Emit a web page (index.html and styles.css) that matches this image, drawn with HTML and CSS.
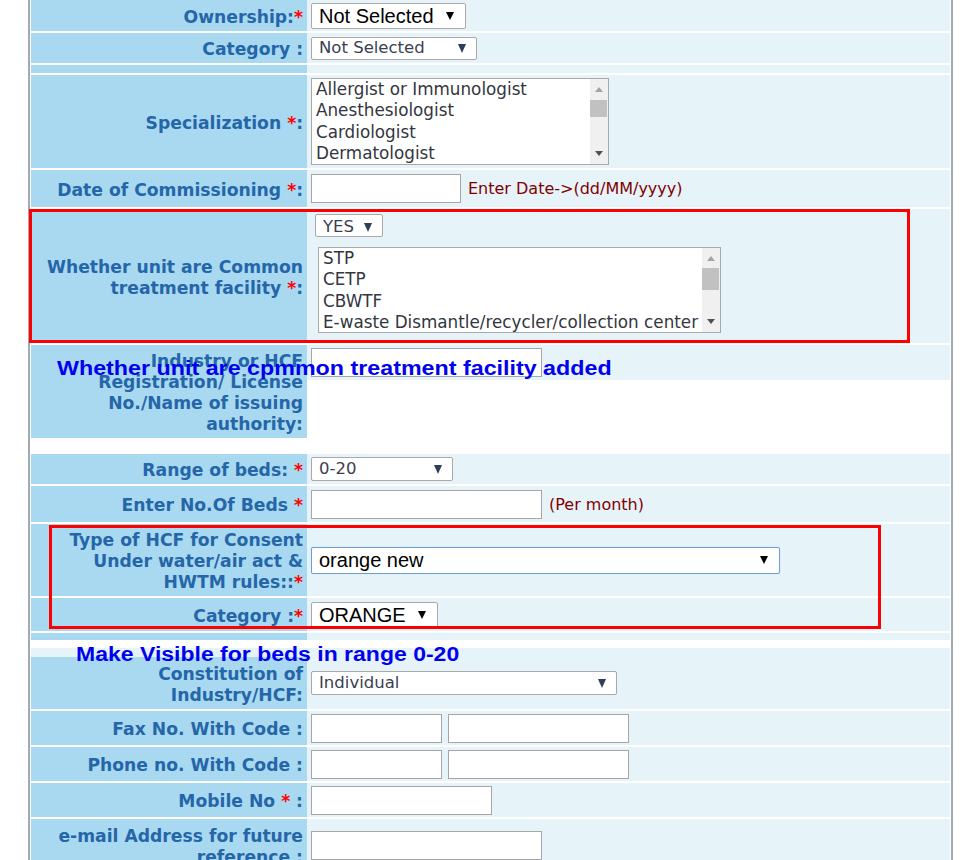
FILE: index.html
```html
<!DOCTYPE html>
<html lang="en">
<head>
<meta charset="utf-8">
<title>Industry / HCF Registration</title>
<link rel="stylesheet" href="styles.css">
</head>
<body>
<div class="page">

  <div class="row r-own">
    <div class="lbl lbl-own"><span>Ownership:<b class="req">*</b></span></div>
    <div class="val"><div class="sel big s-own">Not Selected</div></div>
  </div>

  <div class="row r-cat">
    <div class="lbl"><span>Category :</span></div>
    <div class="val"><div class="sel s-cat">Not Selected</div></div>
  </div>

  <div class="row r-empty">
    <div class="lbl"></div>
    <div class="val"></div>
  </div>

  <div class="row r-spec">
    <div class="lbl"><span>Specialization <b class="req">*</b>:</span></div>
    <div class="val">
      <div class="lb lb-spec">
        <div class="lb-opts">
          <div>Allergist or Immunologist</div>
          <div>Anesthesiologist</div>
          <div>Cardiologist</div>
          <div>Dermatologist</div>
        </div>
        <div class="sb"><span class="sb-up"></span><span class="sb-thumb t1"></span><span class="sb-fill"></span><span class="sb-dn"></span></div>
      </div>
    </div>
  </div>

  <div class="row r-date">
    <div class="lbl"><span>Date of Commissioning <b class="req">*</b>:</span></div>
    <div class="val"><input class="inp i-date" type="text"><span class="hint">Enter Date-&gt;(dd/MM/yyyy)</span></div>
  </div>

  <div class="mark">
    <div class="row r-ctf">
      <div class="lbl"><span>Whether unit are Common<br>treatment facility <b class="req">*</b>:</span></div>
      <div class="val val-col">
        <div class="sel s-yes">YES</div>
        <div class="lb lb-ctf">
          <div class="lb-opts">
            <div>STP</div>
            <div>CETP</div>
            <div>CBWTF</div>
            <div>E-waste Dismantle/recycler/collection center</div>
          </div>
          <div class="sb"><span class="sb-up"></span><span class="sb-thumb t2"></span><span class="sb-fill"></span><span class="sb-dn"></span></div>
        </div>
      </div>
    </div>
    <span class="redbox rb1"></span>
  </div>

  <div class="row r-ind">
    <div class="lbl"><span>Industry or HCF<br>Registration/ License<br>No./Name of issuing<br>authority:</span></div>
    <div class="val val-top"><div class="valbox"><input class="inp i-wide" type="text"></div></div>
    <div class="ann ann1">Whether unit are cpmmon treatment facility added</div>
  </div>

  <div class="row r-range">
    <div class="lbl"><span>Range of beds: <b class="req">*</b></span></div>
    <div class="val"><div class="sel s-range">0-20</div></div>
  </div>

  <div class="row r-beds">
    <div class="lbl"><span>Enter No.Of Beds <b class="req">*</b></span></div>
    <div class="val"><input class="inp i-wide" type="text"><span class="hint">(Per month)</span></div>
  </div>

  <div class="mark">
    <div class="row r-type">
      <div class="lbl"><span>Type of HCF for Consent<br>Under water/air act &amp;<br>HWTM rules::<b class="req">*</b></span></div>
      <div class="val"><div class="sel big s-type">orange new</div></div>
    </div>
    <div class="row r-cat2">
      <div class="lbl"><span>Category :<b class="req">*</b></span></div>
      <div class="val"><div class="sel big s-orange">ORANGE</div></div>
    </div>
    <span class="redbox rb2"></span>
  </div>

  <div class="row r-blank">
    <div class="lbl"></div>
    <div class="val"></div>
  </div>

  <div class="strip">
    <div class="ann ann2">Make Visible for beds in range 0-20</div>
  </div>

  <div class="row r-const">
    <div class="lbl"><span>Constitution of<br>Industry/HCF:</span></div>
    <div class="val"><div class="sel s-const">Individual</div></div>
  </div>

  <div class="row r-std">
    <div class="lbl"><span>Fax No. With Code :</span></div>
    <div class="val gap"><input class="inp i-code" type="text"><input class="inp i-num" type="text"></div>
  </div>

  <div class="row r-std">
    <div class="lbl"><span>Phone no. With Code :</span></div>
    <div class="val gap"><input class="inp i-code" type="text"><input class="inp i-num" type="text"></div>
  </div>

  <div class="row r-std">
    <div class="lbl"><span>Mobile No <b class="req">*</b> :</span></div>
    <div class="val"><input class="inp i-num" type="text"></div>
  </div>

  <div class="row r-mail">
    <div class="lbl"><span>e-mail Address for future<br>reference :</span></div>
    <div class="val"><input class="inp i-wide" type="text"></div>
  </div>

</div>
</body>
</html>
```
FILE: styles.css
```css
* { box-sizing: border-box; }

html, body {
  margin: 0;
  padding: 0;
  background: #ffffff;
}

.page {
  margin-left: 28px;
  width: 925px;
  min-height: 900px;
  padding: 0 1px;
  border-left: 2px solid #a3a9b0;
  border-right: 2px solid #a3a9b0;
  background: #ffffff;
}

/* ---------- rows ---------- */
.row {
  display: flex;
  margin-bottom: 2px;
}

.lbl {
  width: 276px;
  flex: none;
  display: flex;
  align-items: center;
  justify-content: flex-end;
  padding: 3px 4px 0 0;
  background: #a9d9f1;
  color: #2566a8;
  font: bold 17.2px/21px "DejaVu Sans", Verdana, sans-serif;
  text-align: right;
}

.lbl-own { padding-top: 4px; }

.val {
  flex: 1;
  min-width: 0;
  display: flex;
  align-items: center;
  padding-left: 4px;
  background: #e6f4fa;
}

.val.gap { gap: 6px; }

.req {
  color: #ff0000;
  font-weight: bold;
}

.r-own   { height: 31px; }
.r-cat   { height: 30px; }
.r-empty { height: 8px; }
.r-spec  { height: 93px; }
.r-date  { height: 37px; }
.r-ctf   { height: 134px; }
.r-ind   { height: 93px; margin-bottom: 16px; position: relative; }
.r-range { height: 30px; }
.r-beds  { height: 36px; }
.r-type  { height: 72px; }
.r-cat2  { height: 33px; }
.r-blank { height: 7px; margin-bottom: 8px; }
.r-const { height: 52px; }
.r-std   { height: 34px; }
.r-mail  { height: 52px; }

.val-col {
  flex-direction: column;
  align-items: flex-start;
  padding: 5px 0 0 8px;
}

.val-top {
  background: transparent;
  align-items: flex-start;
  padding-left: 0;
}

.valbox {
  width: 100%;
  height: 35px;
  display: flex;
  align-items: center;
  padding-left: 4px;
  background: #e6f4fa;
}

.strip {
  height: 9px;
  position: relative;
  background: #e6f4fa;
}

/* ---------- selects ---------- */
.sel {
  display: flex;
  align-items: center;
  justify-content: space-between;
  flex: none;
  padding: 1px 10px 0 7px;
  background: #ffffff;
  border: 1px solid #a9a9a9;
  border-radius: 2px;
  color: #3b4050;
  font: 16.5px/1 "DejaVu Sans", Verdana, sans-serif;
  white-space: nowrap;
}

.sel::after {
  content: "";
  border-left: 4.5px solid transparent;
  border-right: 4.5px solid transparent;
  border-top: 9px solid #2e3d58;
}

.sel.big {
  padding-top: 0;
  color: #000000;
  font: 20px/1 "Liberation Sans", Arial, sans-serif;
}

.sel.big::after {
  border-left-width: 4.5px;
  border-right-width: 4.5px;
  border-top: 8px solid #000000;
  margin-right: 1px;
}

.s-own    { width: 155px; height: 26px; }
.s-cat    { width: 166px; height: 23px; }
.s-yes    { width: 68px;  height: 23px; padding-top: 3px; }
.s-range  { width: 142px; height: 24px; }
.s-type   { width: 469px; height: 27px; border-color: #6f9fd8; box-shadow: 0 0 1px #9dbde6; }
.s-type::after { margin-right: 2px; }
.s-orange { width: 127px; height: 26px; }
.s-const  { width: 306px; height: 24px; }

/* ---------- text inputs ---------- */
.inp {
  flex: none;
  height: 29px;
  margin: 0;
  padding: 2px 4px;
  background: #ffffff;
  border: 1px solid #a6a6a6;
  border-radius: 0;
  font: 16px "DejaVu Sans", sans-serif;
}

.i-date { width: 150px; }
.i-wide { width: 231px; }
.i-code { width: 131px; }
.i-num  { width: 181px; }

.hint {
  margin-left: 7px;
  color: #800000;
  font: 16px "DejaVu Sans", Verdana, sans-serif;
  white-space: nowrap;
}

/* ---------- list boxes ---------- */
.lb {
  display: flex;
  flex: none;
  background: #ffffff;
  border: 1px solid #a9a9a9;
  color: #333640;
  font: 16.8px/21.3px "DejaVu Sans", Verdana, sans-serif;
}

.lb-spec { width: 298px; height: 87px; }
.lb-ctf  { width: 403px; height: 86px; margin: 10px 0 0 3px; }

.lb-opts {
  flex: 1;
  min-width: 0;
  padding: 0 4px;
  overflow: hidden;
  white-space: nowrap;
}

.sb {
  width: 18px;
  flex: none;
  display: flex;
  flex-direction: column;
  background: #f0f0f0;
}

.sb-up, .sb-dn {
  height: 21px;
  flex: none;
  display: flex;
  align-items: center;
  justify-content: center;
}

.sb-up::before {
  content: "";
  border-left: 4px solid transparent;
  border-right: 4px solid transparent;
  border-bottom: 5px solid #a3a3a3;
}

.sb-dn::before {
  content: "";
  border-left: 4px solid transparent;
  border-right: 4px solid transparent;
  border-top: 5px solid #505050;
}

.sb-thumb {
  flex: none;
  margin: 0 1px 0 0;
  background: #c1c1c1;
}

.t1 { height: 17px; }
.t2 { height: 22px; margin-top: -1px; }

.sb-fill { flex: 1; }

/* ---------- review annotations (drawn over the form) ---------- */
.mark {
  position: relative;
}

.redbox {
  position: absolute;
  border: 3px solid #ff0000;
  pointer-events: none;
}

.rb1 { left: -2px; top: 0;   width: 881px; height: 134px; }
.rb2 { left: 18px; top: 1px; width: 832px; height: 104px; }

.ann {
  position: absolute;
  z-index: 2;
  color: #0000ee;
  font: bold 20.5px/1 "Liberation Sans", Arial, sans-serif;
  white-space: nowrap;
  transform-origin: left top;
  transform: scaleX(1.135);
}

.ann1 { left: 26px; top: 13px; }
.ann2 { left: 45px; top: -3px; font-size: 19.5px; transform: scaleX(1.18); }
```
